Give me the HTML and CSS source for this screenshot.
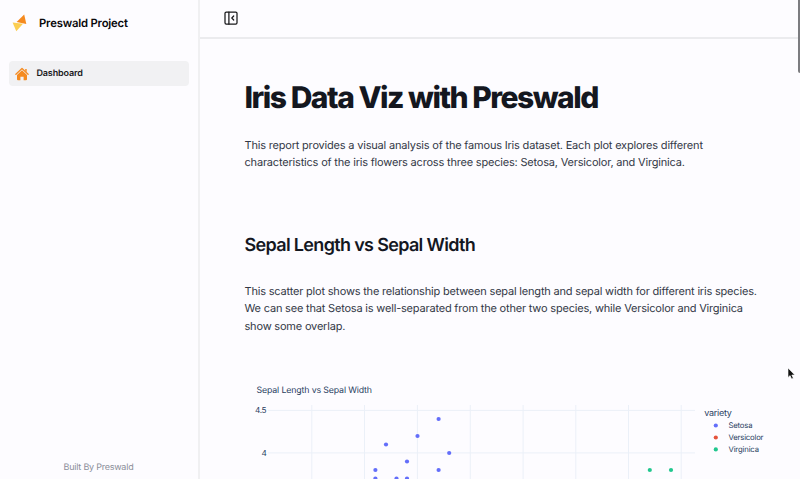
FILE: index.html
```html
<!DOCTYPE html>
<html lang="en">
<head>
<meta charset="utf-8">
<title>Preswald Project</title>
<link rel="stylesheet" href="styles.css">
</head>
<body>
<div class="app">
  <aside class="sidebar">
    <div class="brand">
      <svg class="logo" width="16" height="18" viewBox="0 0 16 18"><path d="M12.2 0.6L14.3 10L4.6 8.1Z" fill="#f58a1f"/><path d="M0.6 8.6L11 9.8L4.3 17.2Z" fill="#fbce52"/></svg>
      <span>Preswald Project</span>
    </div>
    <nav class="nav">
      <a class="nav-item">
        <svg width="14" height="14" viewBox="0 0 14 14"><path d="M0.9 7.2L7 1.5L13.1 7.2" fill="none" stroke="#f58a1f" stroke-width="1.3" stroke-linecap="round" stroke-linejoin="round"/><path d="M10.2 1.9h1.5v3.3l-1.5-1.4Z" fill="#f58a1f"/><path d="M7 3.3L12 7.9V12.3Q12 13.3 11 13.3H8.6V9.8H5.4V13.3H3Q2 13.3 2 12.3V7.9Z" fill="#f58a1f"/></svg>
        <span>Dashboard</span>
      </a>
    </nav>
    <footer class="built">Built By Preswald</footer>
  </aside>
  <div class="main">
    <header class="topbar">
      <svg width="14" height="14" viewBox="0 0 14 14" fill="none" stroke="#18181b" stroke-width="1.25" stroke-linecap="round" stroke-linejoin="round"><rect x="1" y="1" width="12" height="12" rx="1.3"/><path d="M4.9 1V13M9.7 5L7.8 7L9.7 9"/></svg>
    </header>
    <main class="content">
      <h1>Iris Data Viz with Preswald</h1>
      <p class="intro">This report provides a visual analysis of the famous Iris dataset. Each plot explores different<br>characteristics of the iris flowers across three species: Setosa, Versicolor, and Virginica.</p>
      <h2>Sepal Length vs Sepal Width</h2>
      <p class="description">This scatter plot shows the relationship between sepal length and sepal width for different iris species.<br>We can see that Setosa is well-separated from the other two species, while Versicolor and Virginica<br>show some overlap.</p>
      <svg class="chart" width="555" height="109" viewBox="245 370 555 109">
        <g stroke="#ebf0f8" stroke-width="1">
          <path d="M268 410.4H695M268 452.9H695"/>
          <path d="M311.8 405V479M364.5 405V479M417.4 405V479M470.3 405V479M523.1 405V479M575.8 405V479M628.5 405V479M681.2 405V479"/>
        </g>
        <g fill="#2a3f5f">
          <text x="256.5" y="392.7" font-size="8.8" textLength="115.5">Sepal Length vs Sepal Width</text>
          <text x="255" y="413.3" font-size="8.2" textLength="11.5">4.5</text>
          <text x="261.6" y="455.9" font-size="8.2">4</text>
          <text x="704.3" y="416.1" font-size="9" textLength="27.5">variety</text>
          <text x="728.5" y="428.4" font-size="7.7" textLength="24">Setosa</text>
          <text x="728.5" y="440.3" font-size="7.7" textLength="35">Versicolor</text>
          <text x="728.5" y="452.2" font-size="7.7" textLength="30.5">Virginica</text>
        </g>
        <g fill="#636efa" class="setosa">
          <circle cx="438.6" cy="419" r="2.1"/><circle cx="417.5" cy="436" r="2.1"/><circle cx="386" cy="444.5" r="2.1"/><circle cx="449.2" cy="453" r="2.1"/><circle cx="407" cy="461.5" r="2.1"/><circle cx="375.4" cy="470" r="2.1"/><circle cx="438.6" cy="470" r="2.1"/><circle cx="375.4" cy="478.5" r="2.1"/><circle cx="396.5" cy="478.5" r="2.1"/><circle cx="407" cy="478.5" r="2.1"/><circle cx="715.8" cy="425.5" r="2.1"/>
        </g>
        <circle cx="715.8" cy="437.5" r="2.1" fill="#e5533b"/>
        <g fill="#21c78e"><circle cx="715.8" cy="449.4" r="2.1"/><circle cx="649.8" cy="470" r="2.1"/><circle cx="671" cy="470" r="2.1"/></g>
      </svg>
    </main>
  </div>
</div>
<div class="scroll-thumb"></div>
<svg class="cursor" width="9" height="14" viewBox="0 0 9 14"><path d="M1 1V10.5L3.1 8.6L4.6 12L6.3 11.2L4.8 8H7.8Z" fill="#111" stroke="#fff" stroke-width=".6"/></svg>
</body>
</html>
```

FILE: styles.css
```css
* { box-sizing: border-box; }
body {
  margin: 0;
  overflow: hidden;
  background: #fdfcff;
  color: #14171f;
  font-family: Inter, sans-serif;
  text-rendering: geometricPrecision;
}
.app { display: flex; height: 479px; }
.sidebar {
  width: 200px;
  display: flex;
  flex-direction: column;
  border-right: 2px solid #f0f0f2;
}
.brand {
  display: flex;
  align-items: center;
  gap: 11px;
  height: 46px;
  padding-left: 12px;
  color: #09090b;
  font-size: 11.3px;
  font-weight: 600;
  letter-spacing: -.19px;
}
.nav { flex: 1; padding: 15px 9px 0 9px; }
.nav-item {
  display: flex;
  align-items: center;
  gap: 8px;
  height: 25px;
  padding-left: 5.5px;
  border-radius: 4px;
  background: #f1f1f3;
  color: #18181b;
  font-size: 9px;
  font-weight: 600;
  letter-spacing: -.15px;
}
.built {
  padding: 0 1px 5px 0;
  color: #8b8e99;
  font-size: 9px;
  line-height: 13px;
  letter-spacing: -.23px;
  text-align: center;
}
.main { flex: 1; min-width: 0; }
.topbar {
  height: 39px;
  padding: 11px 0 0 24px;
  border-bottom: 2px solid #ebebee;
}
.topbar svg { display: block; }
.content { padding-left: 44.5px; }
h1 {
  margin: 0;
  padding-top: 41px;
  font-size: 30px;
  line-height: 36px;
  font-weight: 800;
  letter-spacing: -1.48px;
  white-space: nowrap;
}
h2 {
  margin: 63.3px 0 0;
  font-size: 18px;
  line-height: 22px;
  font-weight: 600;
  letter-spacing: -.67px;
  white-space: nowrap;
}
p {
  margin: 0;
  color: #333846;
  font-size: 11px;
  line-height: 17.6px;
  letter-spacing: -.192px;
  white-space: nowrap;
}
.intro { margin-top: 20.7px; }
.description { margin-top: 25.6px; }
.chart { display: block; margin-top: 34.4px; }
.scroll-thumb {
  position: absolute;
  top: 0;
  right: 0;
  width: 2px;
  height: 73px;
  border-radius: 0 0 0 2px;
  background: #7c7c80;
}
.cursor { position: absolute; left: 787px; top: 367px; }
```
